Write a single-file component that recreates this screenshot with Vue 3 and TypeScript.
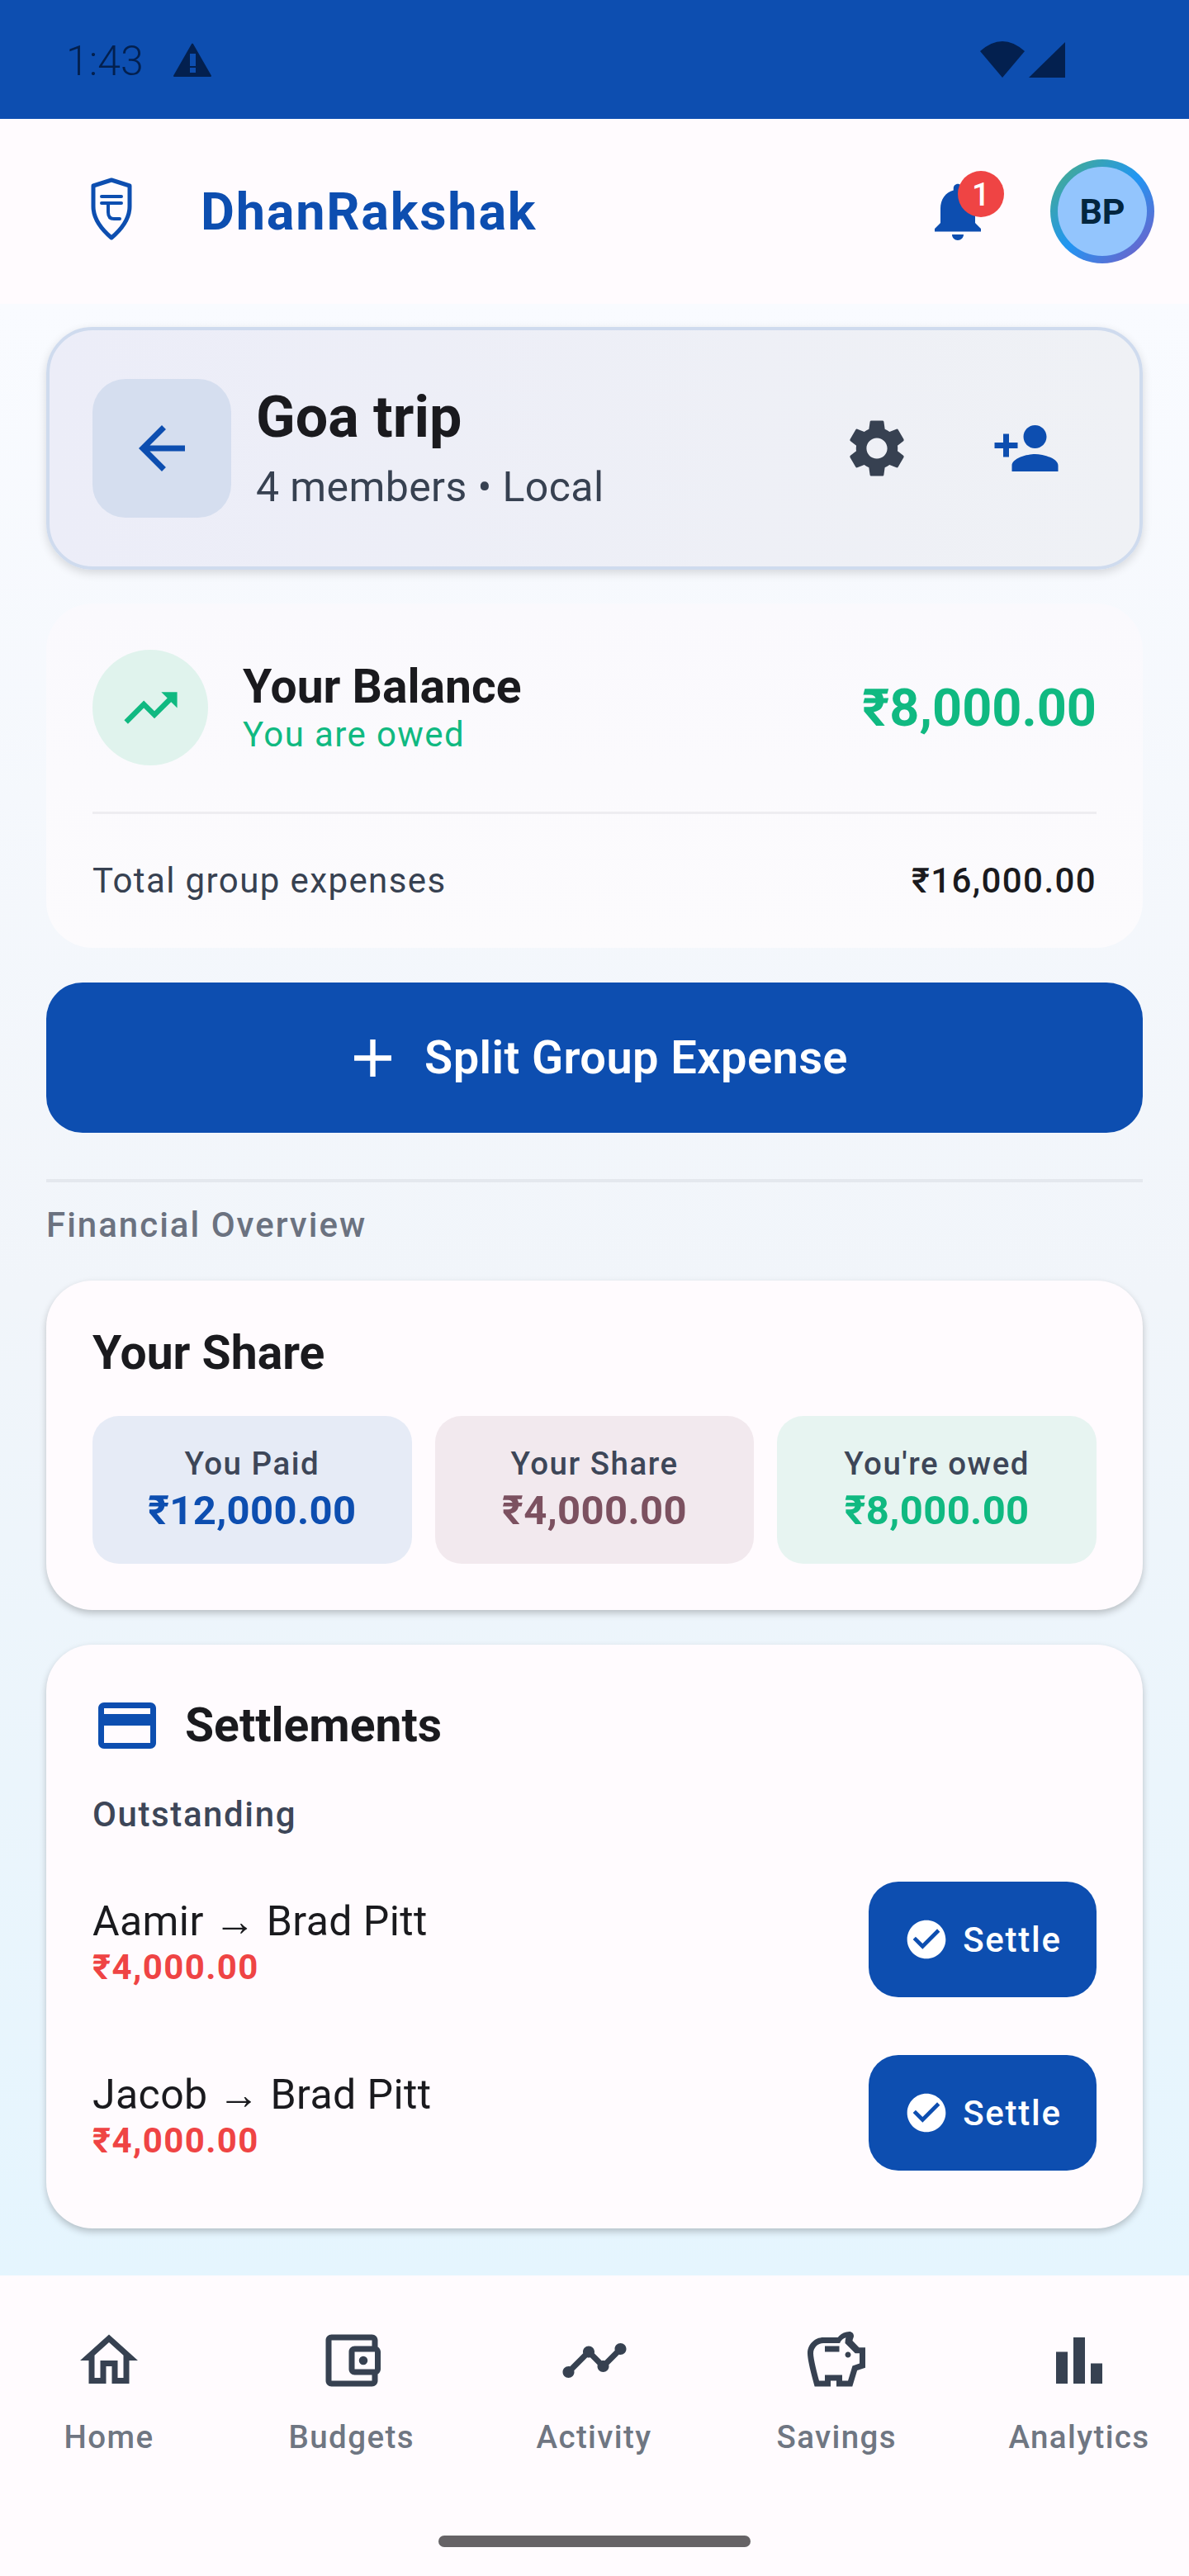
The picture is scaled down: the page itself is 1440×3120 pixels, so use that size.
<script setup lang="ts">
interface Tile {
  label: string
  amount: string
  tone: string
}

interface Settlement {
  from: string
  to: string
  amount: string
}

const tiles: Tile[] = [
  { label: 'You Paid', amount: '₹12,000.00', tone: 'paid' },
  { label: 'Your Share', amount: '₹4,000.00', tone: 'share' },
  { label: "You're owed", amount: '₹8,000.00', tone: 'owed' }
]

const settlements: Settlement[] = [
  { from: 'Aamir', to: 'Brad Pitt', amount: '₹4,000.00' },
  { from: 'Jacob', to: 'Brad Pitt', amount: '₹4,000.00' }
]

const navItems = ['Home', 'Budgets', 'Activity', 'Savings', 'Analytics']
</script>

<template>
  <div class="screen">
    <div class="status-bar">
      <div class="status-left">
        <span class="clock">1:43</span>
        <svg width="46" height="41" viewBox="0 0 46 41">
          <path fill="#03204f" stroke="#03204f" stroke-width="2" stroke-linejoin="round" d="M23 1.5 L45 40 H1 Z" />
          <rect x="20" y="13" width="7" height="15" fill="#0d4eb0" />
          <rect x="20" y="30" width="7" height="6" fill="#0d4eb0" />
        </svg>
      </div>
      <svg width="104" height="44" viewBox="0 0 104 44">
        <path fill="#03204f" d="M0 12 Q27 -12 54 12 L27 44 Z" />
        <path fill="#03204f" d="M59 44 L103 1 V44 Z" />
      </svg>
    </div>

    <header class="app-bar">
      <div class="brand">
        <svg class="logo" width="50" height="76" viewBox="0 0 50 76">
          <path fill="none" stroke="#0d4eb0" stroke-width="5" stroke-linejoin="round" d="M25 3 L47 10 V35 C47 50 38 62 25 73 C12 62 3 50 3 35 V10 Z" />
          <path fill="none" stroke="#0d4eb0" stroke-width="4" stroke-linecap="round" d="M13 23 H37 M13 31 H37 M21 31 V42 C21 48 24 50 28 50 H35" />
        </svg>
        <span class="brand-name">DhanRakshak</span>
      </div>
      <div class="bar-actions">
        <div class="bell-wrap">
          <svg width="84" height="84" viewBox="0 0 24 24">
            <path fill="#0d4eb0" d="M12 22c1.1 0 2-.9 2-2h-4c0 1.1.89 2 2 2zm6-6v-5c0-3.07-1.64-5.64-4.5-6.32V4c0-.83-.67-1.5-1.5-1.5s-1.5.67-1.5 1.5v.68C7.63 5.36 6 7.92 6 11v5l-2 2v1h16v-1l-2-2z" />
          </svg>
          <span class="badge">1</span>
        </div>
        <div class="avatar-ring">
          <div class="avatar">BP</div>
        </div>
      </div>
    </header>

    <main class="content">
      <section class="group-card">
        <button class="back-btn" type="button">
          <svg width="84" height="84" viewBox="0 0 24 24">
            <path fill="#0d4eb0" d="M20 11H7.83l5.59-5.59L12 4l-8 8 8 8 1.41-1.41L7.83 13H20v-2z" />
          </svg>
        </button>
        <div class="group-info">
          <div class="group-name">Goa trip</div>
          <div class="group-meta">4 members • Local</div>
        </div>
        <svg class="gear" width="84" height="84" viewBox="0 0 24 24">
          <path fill="#374151" d="M19.14 12.94c.04-.3.06-.61.06-.94 0-.32-.02-.64-.07-.94l2.03-1.58a.49.49 0 0 0 .12-.61l-1.92-3.32a.488.488 0 0 0-.59-.22l-2.39.96c-.5-.38-1.03-.7-1.62-.94l-.36-2.54a.484.484 0 0 0-.48-.41h-3.84c-.24 0-.43.17-.47.41l-.36 2.54c-.59.24-1.13.57-1.62.94l-2.39-.96c-.22-.08-.47 0-.59.22L2.74 8.87c-.12.21-.08.47.12.61l2.03 1.58c-.05.3-.09.63-.09.94s.02.64.07.94l-2.03 1.58a.49.49 0 0 0-.12.61l1.92 3.32c.12.22.37.29.59.22l2.39-.96c.5.38 1.03.7 1.62.94l.36 2.54c.05.24.24.41.48.41h3.84c.24 0 .44-.17.47-.41l.36-2.54c.59-.24 1.13-.56 1.62-.94l2.39.96c.22.08.47 0 .59-.22l1.92-3.32c.12-.22.07-.47-.12-.61l-2.01-1.58zM12 15.6c-1.98 0-3.6-1.62-3.6-3.6s1.62-3.6 3.6-3.6 3.6 1.62 3.6 3.6-1.62 3.6-3.6 3.6z" />
        </svg>
        <svg width="84" height="84" viewBox="0 0 24 24">
          <path fill="#0d4eb0" d="M15 12c2.21 0 4-1.79 4-4s-1.79-4-4-4-4 1.79-4 4 1.79 4 4 4zm-9-2V7H4v3H1v2h3v3h2v-3h3v-2H6zm9 4c-2.67 0-8 1.34-8 4v2h16v-2c0-2.66-5.33-4-8-4z" />
        </svg>
      </section>

      <section class="balance-card">
        <div class="balance-top">
          <div class="trend-circle">
            <svg width="77" height="77" viewBox="0 0 24 24">
              <path fill="#10b981" d="M16 6l2.29 2.29-4.88 4.88-4-4L2 16.59 3.41 18l6-6 4 4 6.3-6.29L22 12V6z" />
            </svg>
          </div>
          <div class="balance-text">
            <div class="balance-title">Your Balance</div>
            <div class="balance-sub">You are owed</div>
          </div>
          <div class="balance-amount">₹8,000.00</div>
        </div>
        <div class="balance-rule"></div>
        <div class="balance-foot">
          <span class="foot-label">Total group expenses</span>
          <span class="foot-value">₹16,000.00</span>
        </div>
      </section>

      <button class="split-btn" type="button">
        <svg width="77" height="77" viewBox="0 0 24 24">
          <path fill="#fff" d="M19 13h-6v6h-2v-6H5v-2h6V5h2v6h6v2z" />
        </svg>
        <span>Split Group Expense</span>
      </button>

      <div class="section-rule"></div>
      <div class="section-label">Financial Overview</div>

      <section class="card share-card">
        <h2 class="card-title">Your Share</h2>
        <div class="tiles">
          <div v-for="tile in tiles" :key="tile.label" class="tile" :class="tile.tone">
            <div class="tile-label">{{ tile.label }}</div>
            <div class="tile-amount">{{ tile.amount }}</div>
          </div>
        </div>
      </section>

      <section class="card settle-card">
        <div class="settle-head">
          <svg width="84" height="84" viewBox="0 0 24 24">
            <path fill="#0d4eb0" d="M20 4H4c-1.11 0-1.99.89-1.99 2L2 18c0 1.11.89 2 2 2h16c1.11 0 2-.89 2-2V6c0-1.11-.89-2-2-2zm0 14H4v-6h16v6zm0-10H4V6h16v2z" />
          </svg>
          <h2 class="card-title">Settlements</h2>
        </div>
        <div class="outstanding">Outstanding</div>
        <div v-for="item in settlements" :key="item.from" class="settle-row">
          <div class="settle-text">
            <div class="settle-names">{{ item.from }} → {{ item.to }}</div>
            <div class="settle-amount">{{ item.amount }}</div>
          </div>
          <button class="settle-btn" type="button">
            <svg width="56" height="56" viewBox="0 0 24 24">
              <path fill="#fff" d="M12 2C6.48 2 2 6.48 2 12s4.48 10 10 10 10-4.48 10-10S17.52 2 12 2zm-2 15-5-5 1.41-1.41L10 14.17l7.59-7.59L19 8l-9 9z" />
            </svg>
            <span>Settle</span>
          </button>
        </div>
      </section>
    </main>

    <nav class="bottom-nav">
      <div v-for="item in navItems" :key="item" class="nav-item">
        <svg width="84" height="84" viewBox="0 0 24 24">
          <path v-if="item === 'Home'" fill="#374151" d="M12 5.69l5 4.5V18h-2v-6H9v6H7v-7.81l5-4.5M12 3 2 12h3v8h6v-6h2v6h6v-8h3L12 3z" />
          <path v-else-if="item === 'Budgets'" fill="#374151" d="M21 7.28V5c0-1.1-.9-2-2-2H5c-1.11 0-2 .9-2 2v14c0 1.1.89 2 2 2h14c1.1 0 2-.9 2-2v-2.28c.59-.35 1-.98 1-1.72V9c0-.74-.41-1.37-1-1.72zM20 9v6h-7V9h7zM5 19V5h14v2h-6c-1.1 0-2 .9-2 2v6c0 1.1.9 2 2 2h6v2H5z M16 13.5a1.5 1.5 0 1 0 0-3 1.5 1.5 0 0 0 0 3z" />
          <path v-else-if="item === 'Activity'" fill="#374151" d="M23 8c0 1.1-.9 2-2 2-.18 0-.35-.02-.51-.07l-3.56 3.55c.05.16.07.34.07.52 0 1.1-.9 2-2 2s-2-.9-2-2c0-.18.02-.36.07-.52l-2.55-2.55c-.16.05-.34.07-.52.07s-.36-.02-.52-.07l-4.55 4.56c.05.16.07.33.07.51 0 1.1-.9 2-2 2s-2-.9-2-2 .9-2 2-2c.18 0 .35.02.51.07l4.56-4.55C8.02 9.36 8 9.18 8 9c0-1.1.9-2 2-2s2 .9 2 2c0 .18-.02.36-.07.52l2.55 2.55c.16-.05.34-.07.52-.07s.36.02.52.07l3.55-3.56C19.02 8.35 19 8.18 19 8c0-1.1.9-2 2-2s2 .9 2 2z" />
          <path v-else-if="item === 'Savings'" fill="#374151" d="M15 10c0-.55.45-1 1-1s1 .45 1 1-.45 1-1 1-1-.45-1-1zM8 9h5V7H8v2zm14-1.5v6.97l-2.82.94L17.5 21H12v-2h-2v2H4.5S2 12.54 2 9.5 4.46 4 7.5 4h5c.91-1.21 2.36-2 4-2 .83 0 1.5.67 1.5 1.5 0 .21-.04.4-.12.58-.14.32-.26.69-.32 1.09l2.27 2.33H22zm-2 2h-1.5L15 6c0-.65.09-1.29.26-1.91-.97.25-1.76.97-2.1 1.91H7.5C5.57 6 4 7.57 4 9.5c0 1.88 1.22 6.65 2.01 9.5H8v-2h6v2h2.01l1.55-5.15 2.44-.82V9.5z" />
          <path v-else fill="#374151" d="M4 9h4v11H4zm12 4h4v7h-4zm-6-9h4v16h-4z" />
        </svg>
        <span class="nav-label">{{ item }}</span>
      </div>
      <div class="home-indicator"></div>
    </nav>
  </div>
</template>

<style>
html,
body {
  margin: 0;
  background: #fffbfe;
}
</style>

<style scoped>
.screen {
  width: 1440px;
  height: 3120px;
  display: flex;
  flex-direction: column;
  font-family: Roboto, "Noto Sans", sans-serif;
  background: #fffbfe;
  overflow: hidden;
}

.status-bar {
  height: 144px;
  flex: none;
  background: #0d4eb0;
  display: flex;
  justify-content: space-between;
  align-items: flex-start;
  padding: 50px 149px 0 80px;
  box-sizing: border-box;
  color: #03204f;
}

.status-left {
  display: flex;
  align-items: center;
  height: 44px;
  gap: 36px;
}

.clock {
  font-size: 50px;
  font-weight: 300;
  margin-top: 4px;
}

.app-bar {
  height: 224px;
  flex: none;
  display: flex;
  align-items: center;
  justify-content: space-between;
  padding: 0 42px 0 110px;
  background: #fffbfe;
}

.brand {
  display: flex;
  align-items: center;
  gap: 83px;
}

.logo {
  margin-bottom: 6px;
}

.brand-name {
  font-size: 63px;
  font-weight: 700;
  letter-spacing: 1.75px;
  color: #0d4eb0;
}

.bar-actions {
  display: flex;
  align-items: center;
  gap: 70px;
}

.bell-wrap {
  position: relative;
  width: 84px;
  height: 84px;
}

.bell-wrap svg {
  display: block;
}

.badge {
  position: absolute;
  top: -7px;
  left: 42px;
  width: 56px;
  height: 56px;
  border-radius: 50%;
  background: #ef4444;
  color: #fff;
  font-size: 38.5px;
  font-weight: 500;
  display: flex;
  align-items: center;
  justify-content: center;
}

.avatar-ring {
  width: 126px;
  height: 126px;
  border-radius: 50%;
  padding: 9px;
  box-sizing: border-box;
  background: linear-gradient(135deg, #4caf7f 0%, #2196f3 50%, #7e57c2 100%);
}

.avatar {
  width: 108px;
  height: 108px;
  border-radius: 50%;
  background: #93c5fd;
  color: #02263f;
  font-size: 43px;
  font-weight: 700;
  display: flex;
  align-items: center;
  justify-content: center;
}

.content {
  flex: 1;
  display: flex;
  flex-direction: column;
  padding: 28px 56px 0;
  background: linear-gradient(180deg, #f9fbff 0%, #f1f5fa 50%, #e5f5fe 100%);
}

.group-card {
  height: 294px;
  flex: none;
  box-sizing: border-box;
  border: 4px solid #cfdbee;
  border-radius: 56px;
  background: linear-gradient(90deg, #ecedf8 0%, #eff1f5 100%);
  box-shadow: 0 4px 12px rgba(0, 0, 0, 0.14);
  display: flex;
  align-items: center;
  padding: 0 95px 0 52px;
}

.back-btn {
  width: 168px;
  height: 168px;
  border: 0;
  border-radius: 40px;
  background: #d5deef;
  display: flex;
  align-items: center;
  justify-content: center;
  padding: 0;
}

.group-info {
  flex: 1;
  margin-left: 30px;
  padding-top: 9px;
}

.group-name {
  font-size: 70px;
  font-weight: 700;
  line-height: 85px;
  color: #1a1a1e;
}

.group-meta {
  font-size: 50px;
  line-height: 85px;
  letter-spacing: 0.4px;
  color: #374151;
}

.gear {
  margin-right: 97px;
}

.balance-card {
  margin-top: 41px;
  height: 417px;
  flex: none;
  border-radius: 56px;
  background: linear-gradient(180deg, #faf9fd 0%, #fcfbfd 100%);
  padding: 56px 56px 0;
  box-sizing: border-box;
}

.balance-top {
  display: flex;
  align-items: center;
}

.trend-circle {
  width: 140px;
  height: 140px;
  border-radius: 50%;
  background: #e0f3ed;
  display: flex;
  align-items: center;
  justify-content: center;
}

.balance-text {
  flex: 1;
  margin-left: 42px;
  padding-top: 8px;
}

.balance-title {
  font-size: 57px;
  font-weight: 700;
  line-height: 58px;
  color: #1a1a1e;
}

.balance-sub {
  font-size: 42px;
  line-height: 58px;
  color: #10b981;
  letter-spacing: 1.4px;
}

.balance-amount {
  font-size: 63px;
  font-weight: 700;
  color: #10b981;
}

.balance-rule {
  height: 3px;
  margin-top: 56px;
  background: #eeedf1;
}

.balance-foot {
  display: flex;
  justify-content: space-between;
  align-items: center;
  margin-top: 56px;
  line-height: 49px;
}

.foot-label {
  font-size: 42px;
  color: #374151;
  letter-spacing: 1.4px;
}

.foot-value {
  font-size: 42px;
  font-weight: 500;
  color: #1a1a1e;
  letter-spacing: 1.4px;
}

.split-btn {
  margin-top: 42px;
  height: 182px;
  flex: none;
  border: 0;
  border-radius: 44px;
  background: #0d4eb0;
  color: #fff;
  font-family: inherit;
  font-size: 56px;
  font-weight: 600;
  letter-spacing: 0.4px;
  display: flex;
  align-items: center;
  justify-content: center;
  gap: 24px;
}

.section-rule {
  margin-top: 56px;
  height: 4px;
  flex: none;
  background: #e4e8ee;
}

.section-label {
  margin-top: 27px;
  font-size: 42px;
  font-weight: 500;
  line-height: 50px;
  color: #6b7280;
  letter-spacing: 2px;
}

.card {
  border-radius: 56px;
  background: #fffbfe;
  box-shadow: 0 4px 8px rgba(0, 0, 0, 0.22);
  box-sizing: border-box;
  flex: none;
}

.share-card {
  margin-top: 42px;
  height: 399px;
  padding: 55px 56px 0;
}

.card-title {
  margin: 0;
  font-size: 57px;
  font-weight: 700;
  line-height: 66px;
  color: #1a1a1e;
}

.tiles {
  display: grid;
  grid-template-columns: repeat(3, 1fr);
  gap: 28px;
  margin-top: 43px;
}

.tile {
  height: 179px;
  border-radius: 32px;
  text-align: center;
  display: flex;
  flex-direction: column;
  justify-content: center;
}

.tile.paid {
  background: #e6ebf6;
}

.tile.share {
  background: #f2e9ee;
}

.tile.owed {
  background: #e7f4f1;
}

.tile-label {
  font-size: 38.5px;
  font-weight: 500;
  line-height: 50px;
  letter-spacing: 1.5px;
  color: #3d4658;
}

.tile-amount {
  font-size: 49px;
  font-weight: 700;
  line-height: 64px;
  letter-spacing: 0.35px;
}

.paid .tile-amount {
  color: #0d4eb0;
}

.share .tile-amount {
  color: #7c5160;
}

.owed .tile-amount {
  color: #10b981;
}

.settle-card {
  margin-top: 42px;
  height: 707px;
  padding: 56px 56px 0;
}

.settle-head {
  display: flex;
  align-items: center;
  gap: 28px;
  height: 84px;
}

.outstanding {
  margin-top: 41px;
  font-size: 42px;
  font-weight: 500;
  line-height: 50px;
  color: #3d4658;
  letter-spacing: 1.6px;
}

.settle-row {
  display: flex;
  align-items: center;
  justify-content: space-between;
  height: 140px;
  margin-top: 56px;
}

.settle-row + .settle-row {
  margin-top: 70px;
}

.settle-text {
  padding-top: 12px;
}

.settle-names {
  font-size: 50px;
  line-height: 56px;
  letter-spacing: 0.4px;
  color: #1a1a1e;
}

.settle-amount {
  font-size: 42px;
  font-weight: 700;
  line-height: 56px;
  letter-spacing: 1.4px;
  color: #ef4444;
}

.settle-btn {
  width: 276px;
  height: 140px;
  border: 0;
  border-radius: 36px;
  background: #0d4eb0;
  color: #fff;
  font-family: inherit;
  font-size: 42px;
  font-weight: 500;
  letter-spacing: 1.75px;
  display: flex;
  align-items: center;
  justify-content: center;
  gap: 16px;
  padding: 0;
}

.bottom-nav {
  position: relative;
  height: 364px;
  flex: none;
  display: flex;
  justify-content: space-between;
  padding: 61px 33px 0 32px;
  box-sizing: border-box;
  background: #fffbfe;
}

.nav-item {
  width: 200px;
  display: flex;
  flex-direction: column;
  align-items: center;
}

.nav-label {
  margin-top: 28px;
  font-size: 38.5px;
  font-weight: 500;
  line-height: 46px;
  color: #6f7682;
  letter-spacing: 1.4px;
}

.home-indicator {
  position: absolute;
  left: 531px;
  top: 315px;
  width: 378px;
  height: 14px;
  border-radius: 7px;
  background: #666366;
}
</style>
